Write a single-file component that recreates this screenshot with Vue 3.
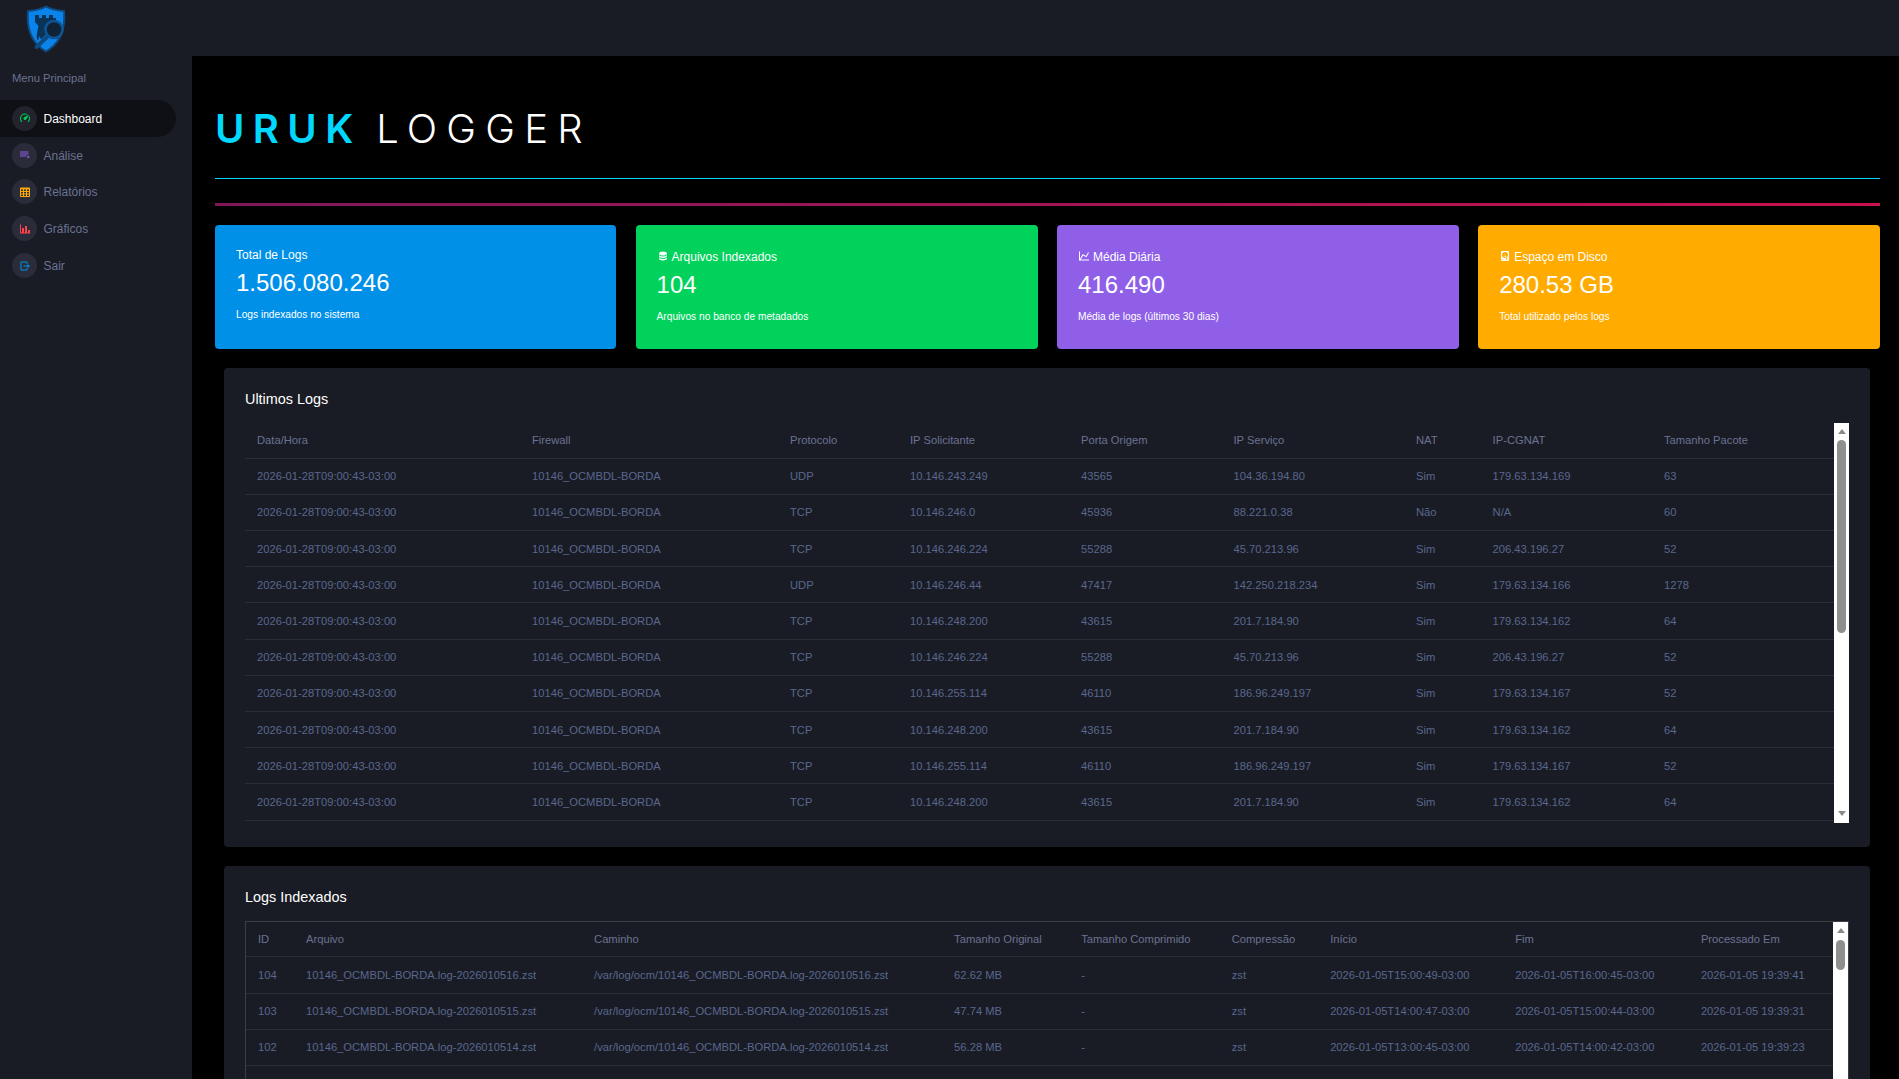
<script setup>
const navItems = [
  { label: 'Dashboard', tone: 'success', active: true, d: 'M12,16A3,3 0 0,1 9,13C9,11.88 9.61,10.9 10.5,10.39L20.21,4.77L14.68,14.35C14.18,15.33 13.17,16 12,16M12,3C13.81,3 15.5,3.5 16.97,4.32L14.87,5.53C14,5.19 13,5 12,5A8,8 0 0,0 4,13C4,15.21 4.89,17.21 6.34,18.65H6.35C6.74,19.04 6.74,19.67 6.35,20.06C5.96,20.45 5.32,20.45 4.93,20.07V20.07C3.12,18.26 2,15.76 2,13A10,10 0 0,1 12,3M22,13C22,15.76 20.88,18.26 19.07,20.07V20.07C18.68,20.45 18.05,20.45 17.66,20.06C17.27,19.67 17.27,19.04 17.66,18.65V18.65C19.11,17.2 20,15.21 20,13C20,12 19.81,11 19.46,10.1L20.67,8C21.5,9.5 22,11.18 22,13Z' },
  { label: 'Análise', tone: 'info', d: 'M19,9H2V11H19V9M19,5H2V7H19V5M2,15H15V13H2V15M17,13V19L22,16L17,13Z' },
  { label: 'Relatórios', tone: 'warning', d: 'M4,3H20A2,2 0 0,1 22,5V20A2,2 0 0,1 20,22H4A2,2 0 0,1 2,20V5A2,2 0 0,1 4,3M4,7V10H8V7H4M10,7V10H14V7H10M20,10V7H16V10H20M4,12V15H8V12H4M4,20H8V17H4V20M10,12V15H14V12H10M10,20H14V17H10V20M20,20V17H16V20H20M20,12H16V15H20V12Z' },
  { label: 'Gráficos', tone: 'danger', d: 'M22,21H2V3H4V19H6V10H10V19H12V6H16V19H18V14H22V21Z' },
  { label: 'Sair', tone: 'primary', d: 'M5,3H15A2,2 0 0,1 17,5V8H15V5H5V19H15V16H17V19A2,2 0 0,1 15,21H5A2,2 0 0,1 3,19V5A2,2 0 0,1 5,3M9,11H17V8L22,12L17,16V13H9Z' },
]

const cards = [
  { title: 'Total de Logs', value: '1.506.080.246', note: 'Logs indexados no sistema', tone: 'primary' },
  { title: 'Arquivos Indexados', value: '104', note: 'Arquivos no banco de metadados', tone: 'success', d: 'M12,3C7.58,3 4,4.79 4,7C4,9.21 7.58,11 12,11C16.42,11 20,9.21 20,7C20,4.79 16.42,3 12,3M4,9V12C4,14.21 7.58,16 12,16C16.42,16 20,14.21 20,12V9C20,11.21 16.42,13 12,13C7.58,13 4,11.21 4,9M4,14V17C4,19.21 7.58,21 12,21C16.42,21 20,19.21 20,17V14C20,16.21 16.42,18 12,18C7.58,18 4,16.21 4,14Z' },
  { title: 'Média Diária', value: '416.490', note: 'Média de logs (últimos 30 dias)', tone: 'info', d: 'M16,11.78L20.24,4.45L21.97,5.45L16.74,14.5L10.23,10.75L5.46,19H22V21H2V3H4V17.54L9.5,8L16,11.78Z' },
  { title: 'Espaço em Disco', value: '280.53 GB', note: 'Total utilizado pelos logs', tone: 'warning', d: 'M6,2H18A2,2 0 0,1 20,4V20A2,2 0 0,1 18,22H6A2,2 0 0,1 4,20V4A2,2 0 0,1 6,2M12,4A6,6 0 0,0 6,10C6,13.31 8.69,16 12.1,16L11.22,13.77C10.95,13.29 11.11,12.68 11.59,12.4L12.45,11.9C12.93,11.63 13.54,11.79 13.82,12.27L15.74,14.69C17.12,13.59 18,11.9 18,10A6,6 0 0,0 12,4M12,9A1,1 0 0,1 13,10A1,1 0 0,1 12,11A1,1 0 0,1 11,10A1,1 0 0,1 12,9M7,18A1,1 0 0,0 6,19A1,1 0 0,0 7,20A1,1 0 0,0 8,19A1,1 0 0,0 7,18M12.09,13.27L14.58,19.58L17.17,18.08L12.95,12.77L12.09,13.27Z' },
]

const logHead = ['Data/Hora', 'Firewall', 'Protocolo', 'IP Solicitante', 'Porta Origem', 'IP Serviço', 'NAT', 'IP-CGNAT', 'Tamanho Pacote']
const logWidths = [275, 258, 120, 171, 152.5, 182.5, 76.6, 171.4, 182]
const base = [
  ['UDP', '10.146.243.249', '43565', '104.36.194.80', 'Sim', '179.63.134.169', '63'],
  ['TCP', '10.146.246.0', '45936', '88.221.0.38', 'Não', 'N/A', '60'],
  ['TCP', '10.146.246.224', '55288', '45.70.213.96', 'Sim', '206.43.196.27', '52'],
  ['UDP', '10.146.246.44', '47417', '142.250.218.234', 'Sim', '179.63.134.166', '1278'],
  ['TCP', '10.146.248.200', '43615', '201.7.184.90', 'Sim', '179.63.134.162', '64'],
  ['TCP', '10.146.246.224', '55288', '45.70.213.96', 'Sim', '206.43.196.27', '52'],
  ['TCP', '10.146.255.114', '46110', '186.96.249.197', 'Sim', '179.63.134.167', '52'],
  ['TCP', '10.146.248.200', '43615', '201.7.184.90', 'Sim', '179.63.134.162', '64'],
  ['TCP', '10.146.255.114', '46110', '186.96.249.197', 'Sim', '179.63.134.167', '52'],
  ['TCP', '10.146.248.200', '43615', '201.7.184.90', 'Sim', '179.63.134.162', '64'],
]
const logRows = base.map((r) => ['2026-01-28T09:00:43-03:00', '10146_OCMBDL-BORDA', ...r])

const fileHead = ['ID', 'Arquivo', 'Caminho', 'Tamanho Original', 'Tamanho Comprimido', 'Compressão', 'Início', 'Fim', 'Processado Em']
const fileWidths = [48, 288, 360, 127, 150.6, 98.4, 185, 185.7, 144]
const known = [
  ['104', '2026010516', '62.62 MB', '2026-01-05T15:00:49-03:00', '2026-01-05T16:00:45-03:00', '2026-01-05 19:39:41'],
  ['103', '2026010515', '47.74 MB', '2026-01-05T14:00:47-03:00', '2026-01-05T15:00:44-03:00', '2026-01-05 19:39:31'],
  ['102', '2026010514', '56.28 MB', '2026-01-05T13:00:45-03:00', '2026-01-05T14:00:42-03:00', '2026-01-05 19:39:23'],
]
const fileRows = known.map((k) => {
  const name = `10146_OCMBDL-BORDA.log-${k[1]}.zst`
  return [k[0], name, `/var/log/ocm/${name}`, k[2], '-', 'zst', k[3], k[4], k[5]]
})
</script>

<template>
  <div class="app">
    <header class="topbar">
      <svg class="logo" viewBox="0 0 40 48" aria-label="Uruk">
        <path class="shield" d="M20 1.5C25 4.5 31 5.5 38 6C39.5 22 36 37 20 46.5C4 37 .5 22 2 6C9 5.5 15 4.5 20 1.5Z" />
        <path class="tower" d="M9 10H13V13H16V10H20V13H23V10H27V13H30V16C24 18 21 22 21.5 28L15 34.5L13.5 31L12 36C10.5 34 10.5 31 11 28L12.5 21L9 17Z" />
        <circle class="lens" cx="28" cy="24.5" r="8.5" />
        <path class="handle" d="M21 32 10.5 42" />
      </svg>
    </header>
    <div class="body">
      <nav class="sidebar">
        <div class="menu-title">Menu Principal</div>
        <a v-for="item in navItems" :key="item.label" class="nav-item" :class="{ active: item.active }">
          <span class="nav-icon">
            <svg viewBox="0 0 24 24" :class="'ink-' + item.tone"><path :d="item.d" fill="currentColor" /></svg>
          </span>
          <span class="nav-label">{{ item.label }}</span>
        </a>
      </nav>
      <main class="main">
        <h1 class="brand"><strong>URUK</strong> <span>LOGGER</span></h1>
        <div class="rule-cyan"></div>
        <div class="rule-pink"></div>
        <section class="cards">
          <article v-for="c in cards" :key="c.title" class="card" :class="'bg-' + c.tone">
            <div class="card-title" :class="{ 'has-icon': c.d }">
              <svg v-if="c.d" viewBox="0 0 24 24"><path :d="c.d" fill="currentColor" /></svg>
              {{ c.title }}
            </div>
            <div class="card-value">{{ c.value }}</div>
            <div class="card-note">{{ c.note }}</div>
          </article>
        </section>
        <section class="panel">
          <h2>Ultimos Logs</h2>
          <div class="scroller">
            <div class="viewport">
              <table class="t-logs">
                <colgroup><col v-for="(w, i) in logWidths" :key="i" :style="{ width: w + 'px' }" /></colgroup>
                <thead><tr><th v-for="h in logHead" :key="h">{{ h }}</th></tr></thead>
                <tbody>
                  <tr v-for="(r, i) in logRows" :key="i"><td v-for="(v, j) in r" :key="j">{{ v }}</td></tr>
                </tbody>
              </table>
            </div>
            <div class="sb">
              <i class="arrow up"></i>
              <i class="thumb thumb-long"></i>
              <i class="arrow down"></i>
            </div>
          </div>
        </section>
        <section class="panel">
          <h2>Logs Indexados</h2>
          <div class="scroller boxed">
            <div class="viewport">
              <table class="t-files">
                <colgroup><col v-for="(w, i) in fileWidths" :key="i" :style="{ width: w + 'px' }" /></colgroup>
                <thead><tr><th v-for="h in fileHead" :key="h">{{ h }}</th></tr></thead>
                <tbody>
                  <tr v-for="(r, i) in fileRows" :key="i"><td v-for="(v, j) in r" :key="j">{{ v }}</td></tr>
                  <tr><td colspan="9"></td></tr>
                </tbody>
              </table>
            </div>
            <div class="sb">
              <i class="arrow up"></i>
              <i class="thumb thumb-short"></i>
              <i class="arrow down"></i>
            </div>
          </div>
        </section>
      </main>
    </div>
  </div>
</template>

<style>
html, body { margin: 0; background: #000; overflow: hidden; }
</style>

<style scoped>
.app {
  height: 100vh;
  overflow: hidden;
  display: flex;
  flex-direction: column;
  background: #191c24;
  font-family: "Liberation Sans", Arial, sans-serif;
  color: #6c7293;
}
.topbar { height: 56px; flex: none; background: #191c24; padding: 5px 0 0 26px; box-sizing: border-box; }
.logo { width: 40px; height: 48px; display: block; }
.shield { fill: #0a84ea; stroke: #0e4a80; stroke-width: 2; }
.tower { fill: #0a3358; }
.lens { fill: #0f2236; stroke: #0e5595; stroke-width: 2.5; }
.handle { stroke: #0e4a80; stroke-width: 4; stroke-linecap: round; fill: none; }
.body { flex: 1; min-height: 0; display: flex; }
.sidebar { width: 192px; flex: none; background: #191c24; }
.menu-title { font-size: 11.2px; line-height: 16px; padding: 14px 0 0 12px; margin-bottom: 14px; }
.nav-item {
  display: flex;
  align-items: center;
  gap: 6.5px;
  height: 36.8px;
  width: 176px;
  padding-left: 12px;
  box-sizing: border-box;
  font-size: 12px;
  border-radius: 0 18.5px 18.5px 0;
}
.nav-label { padding-top: 1px; }
.nav-item.active { background: #0f1015; color: #fff; }
.nav-icon {
  width: 25px;
  height: 25px;
  border-radius: 50%;
  background: rgba(108, 114, 147, 0.2);
  display: flex;
  align-items: center;
  justify-content: center;
}
.nav-icon svg { width: 12px; height: 12px; }
.ink-success { color: #00d25b; }
.ink-info { color: #8f5fe8; }
.ink-warning { color: #ffab00; }
.ink-danger { color: #fc424a; }
.ink-primary { color: #0090e7; }
.main { flex: 1; min-width: 0; background: #000; padding: 0 19px 0 23px; overflow: hidden; }
.brand {
  margin: 0;
  padding-top: 49px;
  font: 300 40px/48px Inter, sans-serif;
  letter-spacing: 9.2px;
  word-spacing: -6px;
  color: #fff;
  height: 73px;
}
.brand strong { font-weight: 600; letter-spacing: 8.4px; color: #00d8ff; }
.rule-cyan { height: 1px; background: #00d8ff; }
.rule-pink { height: 3px; margin-top: 24px; background: linear-gradient(90deg, #7f1859, #c8114f); }
.cards { display: grid; grid-template-columns: 401.2px 402px 401.8px 1fr; gap: 19.4px; margin-top: 19px; }
.card { height: 124px; box-sizing: border-box; padding: 21px 21px; border-radius: 4px; color: #fff; }
.bg-primary { background: #0090e7; }
.bg-success { background: #00d25b; }
.bg-info { background: #8f5fe8; }
.bg-warning { background: #ffab00; }
.card-title { font-size: 12px; line-height: 18px; display: flex; align-items: center; gap: 3px; }
.card-title svg { width: 12px; height: 12px; margin-top: -3px; }
.card-title.has-icon { padding-top: 2px; }
.card-value { font-size: 24px; line-height: 28px; margin-top: 5px; }
.card-note { font-size: 10.2px; line-height: 15px; margin-top: 9.5px; }
.panel { margin: 19.4px 10px 0 9px; padding: 21px 21px 23px; background: #191c24; border-radius: 4px; height: 478.4px; box-sizing: border-box; }
.panel h2 { margin: 2px 0 14.6px; font-size: 14.4px; line-height: 17px; font-weight: 400; color: #fff; }
.scroller { height: 400px; display: flex; }
.scroller.boxed { border: 1px solid #3c3e43; border-bottom: 0; }
.viewport { flex: 1; min-width: 0; overflow: hidden; }
.sb { width: 15px; flex: none; background: #fff; display: flex; flex-direction: column; align-items: center; padding: 6px 0 7px; box-sizing: border-box; }
.arrow { width: 0; height: 0; border-left: 4.5px solid transparent; border-right: 4.5px solid transparent; }
.up { border-bottom: 5px solid #8a8a8a; }
.down { border-top: 5px solid #8a8a8a; margin-top: auto; }
.thumb { width: 9px; background: #8f8f8f; border-radius: 4.5px; }
.thumb-long { height: 193px; margin-top: 6px; }
.thumb-short { height: 30px; margin-top: 7px; }
table { border-collapse: collapse; table-layout: fixed; width: 100%; font-size: 11.2px; }
th, td { padding: 0 12px; height: 36.2px; text-align: left; font-weight: 400; border-bottom: 1px solid #2c2e33; white-space: nowrap; box-sizing: border-box; }
th { color: #6c7293; height: 35.2px; }
td { color: #5a678f; }
.t-logs th { padding-bottom: 1px; }
</style>
